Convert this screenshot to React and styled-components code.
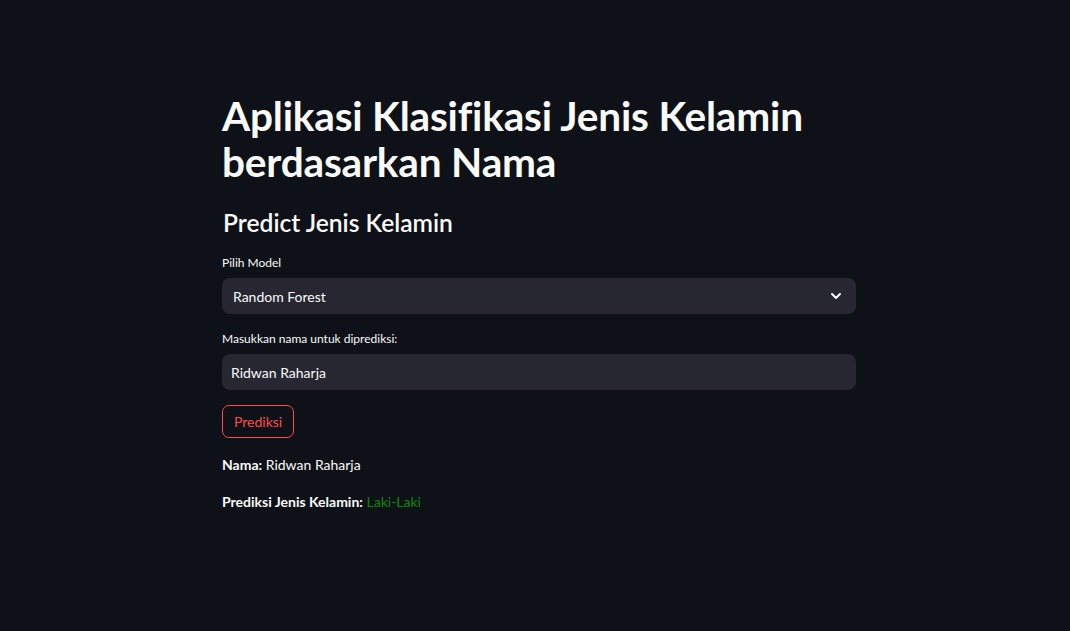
import React from 'react'
import styled, { createGlobalStyle } from 'styled-components'

const GlobalStyle = createGlobalStyle`
  body {
    margin: 0;
    background: #0e1117;
    color: #fafafa;
    font-family: Lato, "Noto Sans", sans-serif;
  }
`

const Page = styled.div`
  min-height: 631px;
  background: #0e1117;
  padding: 93px 0 0 222px;
  box-sizing: border-box;
`

const Main = styled.div`
  width: 634px;
  display: flex;
  flex-direction: column;
`

const Title = styled.h1`
  margin: 0;
  font-size: 40.6px;
  font-weight: 700;
  line-height: 46px;
  letter-spacing: -0.2px;
`

const Subtitle = styled.h2`
  margin: 23px 0 0 1px;
  font-size: 24.6px;
  font-weight: 600;
  line-height: 30px;
`

const Label = styled.label`
  display: block;
  margin-top: ${p => p.top || 16}px;
  font-size: 12px;
  line-height: 16px;
  color: #fafafa;
`

const Field = styled.div`
  margin-top: 7px;
  height: 36px;
  border-radius: 8px;
  background: #262730;
  display: flex;
  align-items: center;
  justify-content: space-between;
  padding: 0 14px 0 ${p => p.pad || 10}px;
  font-size: 14px;
  color: #fafafa;
`

const Button = styled.button`
  margin-top: 15px;
  align-self: flex-start;
  height: 33px;
  padding: 0 11px;
  border: 1px solid #ff4b4b;
  border-radius: 7px;
  background: transparent;
  color: #ff4b4b;
  font-family: inherit;
  font-size: 14px;
`

const Line = styled.p`
  margin: ${p => p.top}px 0 0;
  font-size: 14px;
  line-height: 20px;
  b { font-weight: 700; }
`

const Green = styled.span`
  color: #098a09;
`

function Chevron() {
  return (
    <svg width="12" height="12" viewBox="0 0 12 12">
      <path d="M2 4l4 4 4-4" fill="none" stroke="#fafafa" strokeWidth="2" strokeLinecap="round" strokeLinejoin="round" />
    </svg>
  )
}

export default function App() {
  return (
    <Page>
      <GlobalStyle />
      <Main>
        <Title>Aplikasi Klasifikasi Jenis Kelamin berdasarkan Nama</Title>
        <Subtitle>Predict Jenis Kelamin</Subtitle>
        <Label top={17}>Pilih Model</Label>
        <Field pad={11}>
          <span>Random Forest</span>
          <Chevron />
        </Field>
        <Label top={17}>Masukkan nama untuk diprediksi:</Label>
        <Field pad={9}>
          <span>Ridwan Raharja</span>
        </Field>
        <Button>Prediksi</Button>
        <Line top={17}><b>Nama:</b> Ridwan Raharja</Line>
        <Line top={17}><b>Prediksi Jenis Kelamin:</b> <Green>Laki-Laki</Green></Line>
      </Main>
    </Page>
  )
}
